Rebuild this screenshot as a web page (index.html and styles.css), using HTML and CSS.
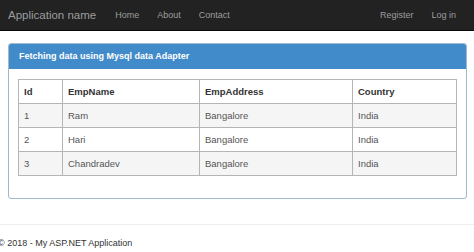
FILE: index.html
```html
<!DOCTYPE html>
<html lang="en">
<head>
    <meta charset="UTF-8">
    <meta name="viewport" content="width=device-width, initial-scale=1.0">
    <title>Fetching data using Mysql data Adapter</title>
    <link rel="stylesheet" href="styles.css">
</head>
<body>
    <div class="navbar">
        <a class="brand" href="#">Application name</a>
        <div class="nav-links">
            <a href="#">Home</a>
            <a href="#">About</a>
            <a href="#">Contact</a>
        </div>
        <div class="nav-right">
            <a href="#">Register</a>
            <a href="#">Log in</a>
        </div>
    </div>

    <div class="body-content">
        <div class="panel">
            <div class="panel-heading">Fetching data using Mysql data Adapter</div>
            <div class="panel-body">
                <table class="emp-table">
                    <thead>
                        <tr>
                            <th class="col-id">Id</th>
                            <th class="col-name">EmpName</th>
                            <th class="col-addr">EmpAddress</th>
                            <th>Country</th>
                        </tr>
                    </thead>
                    <tbody>
                        <tr><td>1</td><td>Ram</td><td>Bangalore</td><td>India</td></tr>
                        <tr><td>2</td><td>Hari</td><td>Bangalore</td><td>India</td></tr>
                        <tr><td>3</td><td>Chandradev</td><td>Bangalore</td><td>India</td></tr>
                    </tbody>
                </table>
            </div>
        </div>

        <hr class="footer-line">
        <div class="footer">&copy; 2018 - My ASP.NET Application</div>
    </div>
</body>
</html>
```

FILE: styles.css
```css
body {
    font-family: 'Liberation Sans', Arial, sans-serif;
    margin: 0;
    background: #fff;
    color: #333;
}

a {
    text-decoration: none;
}

.navbar {
    display: flex;
    align-items: center;
    height: 30px;
    background: #222;
    border-bottom: 1px solid #080808;
    padding: 0 9px 0 8px;
}

.brand {
    color: #9d9d9d;
    font-size: 11.5px;
    margin-right: 10px;
}

.nav-links,
.nav-right {
    display: flex;
}

.nav-right {
    margin-left: auto;
}

.nav-links a,
.nav-right a {
    color: #9d9d9d;
    font-size: 9px;
    padding: 0 9px;
}

.body-content {
    padding: 12px 7px 0 8px;
}

.panel {
    border: 1px solid #9fb9cf;
    border-radius: 3px;
    overflow: hidden;
}

.panel-heading {
    background: #428bca;
    color: #fff;
    font-weight: bold;
    font-size: 9px;
    height: 25px;
    line-height: 25px;
    padding-left: 10px;
}

.panel-body {
    padding: 10px 9px 22px 9px;
}

.emp-table {
    width: 100%;
    border-collapse: collapse;
    font-size: 9.5px;
    border: 1px solid #999;
}

.emp-table th,
.emp-table td {
    border: 1px solid #b5b5b5;
    height: 23px;
    padding: 0 5px;
    text-align: left;
}

.emp-table th {
    font-weight: bold;
    color: #333;
}

.emp-table td {
    color: #555;
}

.emp-table tbody tr:nth-child(odd) {
    background: #f5f5f5;
}

.col-id { width: 33px; }
.col-name { width: 126px; }
.col-addr { width: 142px; }

.footer-line {
    border: 0;
    border-top: 1px solid #eee;
    margin: 25px -7px 0 -8px;
}

.footer {
    font-size: 9px;
    color: #333;
    margin: 13px 0 0 -10px;
}
```
